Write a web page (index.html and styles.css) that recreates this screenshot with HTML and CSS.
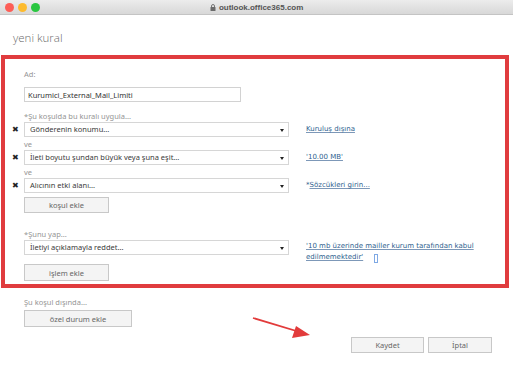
FILE: index.html
```html
<!DOCTYPE html>
<html lang="tr">
<head>
  <meta charset="UTF-8">
  <title>yeni kural</title>
  <link rel="stylesheet" href="styles.css">
</head>
<body>
  <div class="titlebar">
    <div class="lights">
      <span class="light red"></span>
      <span class="light yellow"></span>
      <span class="light green"></span>
    </div>
    <div class="url">
      <svg class="lock" width="6" height="7" viewBox="0 0 6 7">
        <path d="M1.5 3V2a1.5 1.5 0 0 1 3 0v1" fill="none" stroke="#6b6b6b" stroke-width="0.9"/>
        <rect x="0.5" y="3" width="5" height="4" rx="0.6" fill="#6b6b6b"/>
      </svg>
      outlook.office365.com
    </div>
  </div>

  <div class="page">
    <h1>yeni kural</h1>

    <div class="rule">
      <div class="lbl lbl-first">Ad:</div>
      <input class="name" type="text" value="Kurumici_External_Mail_Limiti">

      <div class="lbl lbl-gap">*Şu koşulda bu kuralı uygula...</div>
      <div class="row">
        <span class="x">✖</span>
        <div class="select">Gönderenin konumu...<span class="arrow"></span></div>
        <a class="link" href="#">Kuruluş dışına</a>
      </div>
      <div class="lbl lbl-ve">ve</div>
      <div class="row">
        <span class="x">✖</span>
        <div class="select">İleti boyutu şundan büyük veya şuna eşit...<span class="arrow"></span></div>
        <a class="link" href="#">'10.00 MB'</a>
      </div>
      <div class="lbl lbl-ve">ve</div>
      <div class="row">
        <span class="x">✖</span>
        <div class="select">Alıcının etki alanı...<span class="arrow"></span></div>
        <span class="link plain">*<a href="#">Sözcükleri girin...</a></span>
      </div>
      <button class="btn btn-add">koşul ekle</button>

      <div class="lbl lbl-action">*Şunu yap...</div>
      <div class="row">
        <span class="x"></span>
        <div class="select">İletiyi açıklamayla reddet...<span class="arrow"></span></div>
        <a class="link long" href="#">'10 mb üzerinde mailler kurum tarafından kabul edilmemektedir'</a><span class="caret"></span>
      </div>
      <button class="btn btn-action">işlem ekle</button>
    </div>

    <div class="lbl lbl-except">Şu koşul dışında...</div>
    <button class="btn btn-except">özel durum ekle</button>

    <div class="footer">
      <button class="btn btn-foot btn-save">Kaydet</button>
      <button class="btn btn-foot btn-cancel">İptal</button>
    </div>

    <svg class="pointer" width="70" height="30" viewBox="0 0 70 30">
      <line x1="2" y1="3" x2="52" y2="18" stroke="#e23b3b" stroke-width="1.8"/>
      <polygon points="59,20 41,23 45,11" fill="#e23b3b"/>
    </svg>
  </div>
</body>
</html>
```

FILE: styles.css
```css
body {
  margin: 0;
  background-color: #ffffff;
  font-family: 'Noto Sans', 'Open Sans', sans-serif;
  color: #444;
  width: 513px;
  height: 378px;
  overflow: hidden;
}

.titlebar {
  height: 14px;
  background: linear-gradient(#ececec, #d8d8d8);
  border-bottom: 1px solid #c4c4c4;
  display: flex;
  align-items: center;
  position: relative;
}

.lights {
  display: flex;
  gap: 4px;
  margin-left: 5px;
}

.light {
  width: 9px;
  height: 9px;
  border-radius: 50%;
}

.red { background-color: #fd5e57; }
.yellow { background-color: #fdbb2e; }
.green { background-color: #29c640; }

.url {
  flex: 1;
  text-align: center;
  font-family: 'Liberation Sans', sans-serif;
  font-size: 8px;
  font-weight: bold;
  color: #555;
  margin-right: 40px;
}

.lock {
  vertical-align: -1px;
  margin-right: 1px;
}

.page {
  position: relative;
}

h1 {
  font-family: 'Open Sans', sans-serif;
  font-weight: 300;
  font-size: 11.5px;
  line-height: 14px;
  color: #6a6a6a;
  margin: 16px 0 10px 13px;
}

.rule {
  margin: 0 4px 0 1px;
  border: 4px solid #e03c3e;
  padding: 9px 8px 3px 0;
}

.lbl {
  margin-left: 24px;
  font-size: 7.5px;
  line-height: 12px;
  color: #959595;
}

.rule .lbl {
  margin-left: 19px;
}

.lbl-gap { margin-top: 8px; }
.lbl-ve { margin-top: 1px; }
.lbl-action { margin-top: 15px; }

.name {
  display: block;
  box-sizing: border-box;
  margin: 7px 0 0 19px;
  width: 217px;
  height: 15px;
  padding: 0 3px;
  border: 1px solid #d2d2d2;
  font-family: 'Noto Sans', sans-serif;
  font-size: 7.5px;
  color: #333;
  text-decoration: underline wavy #f0a0a0 0.5px;
}

.row {
  display: flex;
  align-items: flex-start;
}

.x {
  width: 19px;
  flex: none;
  font-size: 7.5px;
  line-height: 15px;
  text-align: right;
  padding-right: 5px;
  box-sizing: border-box;
  color: #222;
}

.select {
  width: 265px;
  height: 15px;
  box-sizing: border-box;
  flex: none;
  border: 1px solid #d6d6d6;
  padding: 0 5px;
  font-size: 7.5px;
  line-height: 13px;
  color: #3a3a3a;
  position: relative;
}

.arrow {
  position: absolute;
  right: 4px;
  top: 6px;
  border-left: 2.5px solid transparent;
  border-right: 2.5px solid transparent;
  border-top: 3px solid #222;
}

.link, .link a {
  font-family: 'DejaVu Sans', sans-serif;
  font-size: 7px;
  line-height: 15px;
  color: #2f5f8f;
  text-decoration: underline;
  text-decoration-color: #7d98b8;
}

.link {
  margin-left: 17px;
}

.link.plain {
  text-decoration: none;
}

.link.long {
  width: 196px;
  line-height: 11px;
  margin-top: 1px;
}

.caret {
  display: inline-block;
  width: 2px;
  height: 7px;
  border: 1px solid #7fa9e4;
  margin: 14px 0 0 -128px;
}

.btn {
  display: block;
  box-sizing: border-box;
  background-color: #f4f4f4;
  border: 1px solid #c8c8c8;
  font-family: 'Noto Sans', sans-serif;
  font-size: 7.5px;
  color: #666;
  padding: 0;
}

.btn-add {
  margin: 4px 0 0 19px;
  width: 85px;
  height: 16px;
}

.btn-action {
  margin: 1px 0 0 19px;
  width: 85px;
  height: 17px;
}

.lbl-except {
  margin-top: 8px;
}

.btn-except {
  margin: 2px 0 0 24px;
  width: 108px;
  height: 17px;
}

.footer {
  display: flex;
  justify-content: flex-end;
  gap: 4px;
  margin-top: 10px;
  padding-right: 21px;
}

.btn-foot {
  height: 16px;
}

.btn-save { width: 73px; }
.btn-cancel { width: 64px; }

.pointer {
  position: absolute;
  left: 251px;
  top: 284px;
}
```
